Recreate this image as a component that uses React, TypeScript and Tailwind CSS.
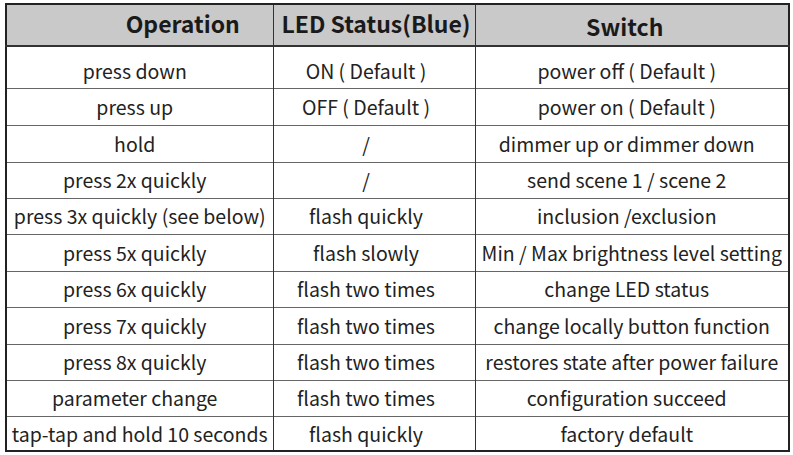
const rows: [string, string, string][] = [
  ["press down", "ON ( Default )", "power off ( Default )"],
  ["press up", "OFF ( Default )", "power on ( Default )"],
  ["hold", "/", "dimmer up or dimmer down"],
  ["press 2x quickly", "/", "send scene 1 / scene 2"],
  ["press 3x quickly (see below)", "flash quickly", "inclusion /exclusion"],
  ["press 5x quickly", "flash slowly", "Min / Max brightness level setting"],
  ["press 6x quickly", "flash two times", "change LED status"],
  ["press 7x quickly", "flash two times", "change locally button function"],
  ["press 8x quickly", "flash two times", "restores state after power failure"],
  ["parameter change", "flash two times", "configuration succeed"],
  ["tap-tap and hold 10 seconds", "flash quickly", "factory default"],
];

const heights = [42, 37, 37, 36, 36, 37, 36, 37, 36, 36, 35];

// the longest strings sit centred, the shorter ones lean left a little
const isLong = (s: string) => s.length > 26;

export default function App() {
  return (
    <div
      className="w-[793px] h-[455px] bg-white pt-[3px] pl-[5px]"
      style={{ fontFamily: '"Noto Sans CJK SC", "Noto Sans", sans-serif' }}
    >
      <table className="border-collapse border-2 border-[#222] table-fixed w-[783px] text-[#222]">
        <colgroup>
          <col className="w-[267px]" />
          <col className="w-[202px]" />
          <col className="w-[314px]" />
        </colgroup>
        <thead>
          <tr className="bg-[#c9c9c9] h-[42px] border-b-2 border-[#333]">
            <th className="text-[23px] font-bold text-[#1a1a1a] text-center pl-[86px] pb-[4px] border-r border-[#333] leading-none">
              Operation
            </th>
            <th className="text-[23px] font-bold text-[#1a1a1a] text-center pb-[4px] pl-[4px] border-r border-[#333] leading-none">
              LED Status(Blue)
            </th>
            <th className="text-[23px] font-bold text-[#1a1a1a] text-center pt-[2px] pr-[14px] leading-none">
              Switch
            </th>
          </tr>
        </thead>
        <tbody>
          {rows.map((r, i) => (
            <tr key={i} style={{ height: heights[i] }} className="border-t border-[#666]">
              <td className={`text-[19.5px] text-center border-r border-[#333] leading-none whitespace-nowrap ${isLong(r[0]) ? "" : "pr-[10px]"} ${i === 0 ? "pt-[6px]" : ""}`}>
                {r[0]}
              </td>
              <td className={`text-[19.5px] text-center pr-[16px] border-r border-[#333] leading-none whitespace-nowrap ${i === 0 ? "pt-[6px]" : ""}`}>
                {r[1]}
              </td>
              <td className={`text-[19.5px] text-center leading-none whitespace-nowrap ${isLong(r[2]) ? "" : "pr-[10px]"} ${i === 0 ? "pt-[6px]" : ""}`}>
                {r[2]}
              </td>
            </tr>
          ))}
        </tbody>
      </table>
    </div>
  );
}
